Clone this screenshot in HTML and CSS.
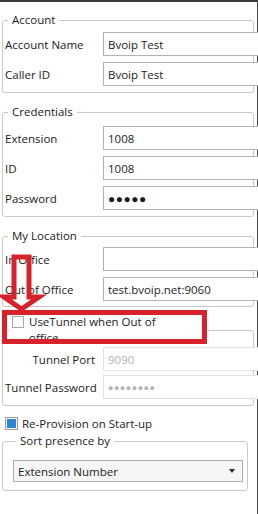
FILE: index.html
```html
<!DOCTYPE html>
<html lang="en">

<head>
    <meta charset="UTF-8">
    <meta name="viewport" content="width=device-width, initial-scale=1.0">
    <title>Account settings</title>
    <link rel="stylesheet" href="styles.css">
</head>

<body>
    <main class="window">
        <fieldset class="group group-account">
            <legend>Account</legend>
            <div class="form-grid">
                <label for="account-name">Account Name</label>
                <input class="field" type="text" id="account-name" value="Bvoip Test">
                <label for="caller-id">Caller ID</label>
                <input class="field" type="text" id="caller-id" value="Bvoip Test">
            </div>
        </fieldset>

        <fieldset class="group group-credentials">
            <legend>Credentials</legend>
            <div class="form-grid">
                <label for="extension">Extension</label>
                <input class="field" type="text" id="extension" value="1008">
                <label for="user-id">ID</label>
                <input class="field" type="text" id="user-id" value="1008">
                <label for="password">Password</label>
                <input class="field dots" type="text" id="password" value="●●●●●">
            </div>
        </fieldset>

        <fieldset class="group group-location">
            <legend>My Location</legend>
            <div class="form-grid">
                <label for="in-office">In Office</label>
                <input class="field" type="text" id="in-office" value="">
                <label for="out-office">Out of Office</label>
                <input class="field" type="text" id="out-office" value="test.bvoip.net:9060">
            </div>
        </fieldset>

        <fieldset class="group group-tunnel">
            <legend class="check-legend">
                <span class="check"></span>
                <span class="check-text">UseTunnel when Out of office</span>
            </legend>
            <div class="form-grid tunnel-grid">
                <label for="tunnel-port">Tunnel Port</label>
                <input class="field" type="text" id="tunnel-port" value="9090" disabled>
                <label for="tunnel-password">Tunnel Password</label>
                <input class="field dots-small" type="text" id="tunnel-password" value="●●●●●●●●" disabled>
            </div>
        </fieldset>

        <div class="check-row">
            <span class="check checked"></span>
            <span>Re-Provision on Start-up</span>
        </div>

        <fieldset class="group group-sort">
            <legend>Sort presence by</legend>
            <div class="combo">
                <span>Extension Number</span>
                <span class="combo-arrow"></span>
            </div>
        </fieldset>
    </main>

    <!-- red markup drawn over the form -->
    <svg class="markup" width="258" height="514" viewBox="0 0 258 514">
        <polygon points="14,257 29,257 29,297 39,297 21.5,309 4,297 14,297" fill="none" stroke="#d8222b" stroke-width="5" stroke-linejoin="miter" />
        <rect x="4.5" y="312.5" width="200" height="29" fill="none" stroke="#d8222b" stroke-width="5" />
    </svg>
</body>

</html>
```

FILE: styles.css
```css
:root {
    --text: #1b1b1b;
    --group-border: #c9c9c9;
    --field-border: #b3b3b3;
    --row-gap: 6px;
}

body {
    margin: 0;
    padding: 0;
    background: #fff;
    position: relative;
    font-family: "Open Sans", "Noto Sans", sans-serif;
    font-size: 11.5px;
    color: var(--text);
}

.window {
    width: 258px;
    height: 514px;
    box-sizing: border-box;
    border-top: 2px solid #3b3b3b;
    border-right: 1px solid #4d4d4d;
    padding: 0 3px 0 2px;
}

.group {
    margin: 0;
    min-width: 0;
    border: 1px solid var(--group-border);
    border-radius: 3px;
    padding: 0 3px 6px 2px;
}

.group legend {
    margin-left: 3px;
    padding: 0 4px;
    line-height: 16px;
}

.group-account {
    margin-top: 10px;
    padding-top: 4px;
}

.group-credentials {
    margin-top: 11px;
    padding-top: 6px;
}

.group-location {
    margin-top: 11px;
    padding-top: 3px;
    padding-bottom: 5px;
}

.group-tunnel {
    margin-top: 7px;
    padding-top: 1px;
}

.group-sort {
    margin-top: 2px;
    margin-right: 6px;
    padding: 11px 4px 8px 10px;
}

.form-grid {
    display: grid;
    grid-template-columns: 98px 1fr;
    row-gap: var(--row-gap);
    align-items: center;
}

.form-grid label {
    white-space: nowrap;
}

.tunnel-grid {
    row-gap: 4px;
}

.tunnel-grid label {
    text-align: right;
    padding-right: 8px;
}

.field {
    height: 24px;
    box-sizing: border-box;
    margin: 0;
    border: 1px solid var(--field-border);
    border-radius: 0;
    padding: 0 4px;
    font-family: inherit;
    font-size: 11.5px;
    color: var(--text);
    background: #fff;
    outline: none;
}

.field:disabled {
    border-color: #e2e2e2;
    color: #b4b4b4;
}

.dots {
    font-size: 12px;
    letter-spacing: 0.5px;
}

.dots-small {
    font-size: 9px;
    letter-spacing: 0.5px;
}

.check-legend {
    display: flex;
    align-items: flex-start;
    gap: 5px;
    width: 196px;
    box-sizing: border-box;
    margin-left: 4px !important;
    padding: 0 3px !important;
}

.check-text {
    width: 140px;
}

.check {
    flex: none;
    width: 12px;
    height: 12px;
    box-sizing: border-box;
    border: 1px solid #a9a9a9;
    background: #fff;
    margin-top: 2px;
}

.check-row {
    display: flex;
    align-items: center;
    gap: 4px;
    height: 16px;
    margin: 9px 0 0 3px;
}

.check.checked {
    width: 13px;
    height: 13px;
    margin-top: 0;
    border-color: #9a9a9a;
    padding: 1px;
    background: #2b87d3;
    background-clip: content-box;
}

.combo {
    display: flex;
    align-items: center;
    justify-content: space-between;
    height: 22px;
    box-sizing: border-box;
    border: 1px solid #adadad;
    background: #f5f5f5;
    padding: 0 7px 0 4px;
}

.combo-arrow {
    width: 0;
    height: 0;
    border-top: 4px solid #2b2b2b;
    border-left: 3.5px solid transparent;
    border-right: 3.5px solid transparent;
}

.markup {
    position: absolute;
    top: 0;
    left: 0;
    pointer-events: none;
}
```
